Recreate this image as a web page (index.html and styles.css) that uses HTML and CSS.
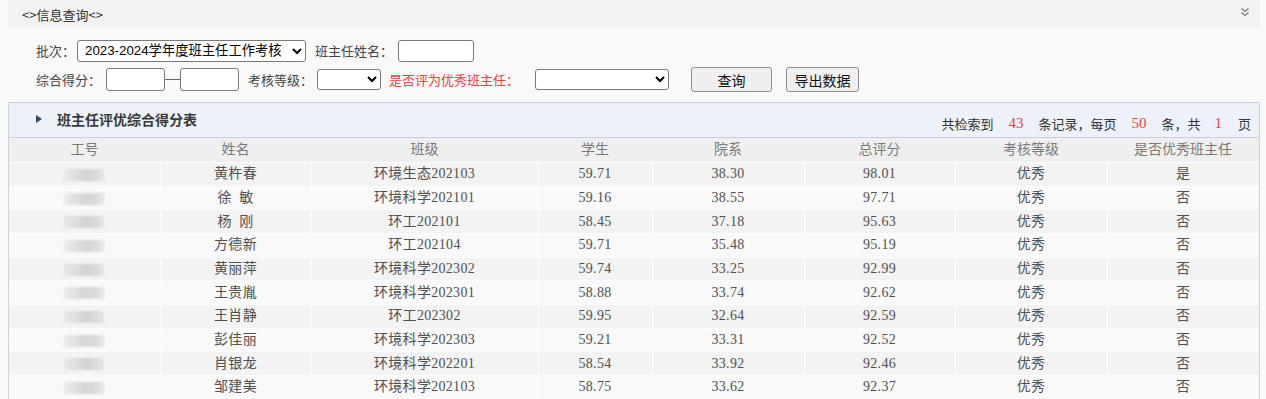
FILE: index.html
```html
<!DOCTYPE html>
<html lang="zh-CN">
<head>
<meta charset="utf-8">
<title>信息查询</title>
<link rel="stylesheet" href="styles.css">
</head>
<body>
<div class="topbar">
  <span class="topbar-title">&lt;&gt;信息查询&lt;&gt;</span>
  <svg class="collapse" width="10" height="10" viewBox="0 0 10 10"><path d="M1.5 1.5 L5 4.5 L8.5 1.5 M1.5 5.5 L5 8.5 L8.5 5.5" fill="none" stroke="#7a7a7a" stroke-width="1.3"/></svg>
</div>

<form class="query">
  <div class="qrow">
    <label class="lbl">批次：</label>
    <select class="sel sel-batch"><option>2023-2024学年度班主任工作考核</option></select>
    <label class="lbl lbl-gap">班主任姓名：</label>
    <input class="inp inp-name" type="text">
  </div>
  <div class="qrow qrow2">
    <label class="lbl">综合得分：</label>
    <input class="inp inp-score inp-first" type="text">
    <span class="dash"></span>
    <input class="inp inp-score" type="text">
    <label class="lbl lbl-gap">考核等级：</label>
    <select class="sel sel-level"><option></option></select>
    <label class="lbl lbl-red">是否评为优秀班主任：</label>
    <select class="sel sel-best"><option></option></select>
    <button type="button" class="btn btn-query">查询</button>
    <button type="button" class="btn btn-export">导出数据</button>
  </div>
</form>

<div class="panel">
  <div class="panel-head">
    <div class="panel-title"><span class="tri"></span>班主任评优综合得分表</div>
    <div class="panel-info">共检索到<span class="num">43</span>条记录，每页<span class="num">50</span>条，共<span class="num num1">1</span>页</div>
  </div>
  <table class="grid">
    <colgroup>
      <col class="c151"><col class="c151"><col class="c227"><col class="c114"><col class="c152"><col class="c151"><col class="c152"><col class="c152">
    </colgroup>
    <thead>
      <tr><th>工号</th><th>姓名</th><th>班级</th><th>学生</th><th>院系</th><th>总评分</th><th>考核等级</th><th>是否优秀班主任</th></tr>
    </thead>
    <tbody>
      <tr><td><span class="blur"></span></td><td>黄杵春</td><td>环境生态202103</td><td>59.71</td><td>38.30</td><td>98.01</td><td>优秀</td><td>是</td></tr>
      <tr><td><span class="blur b2"></span></td><td>徐&nbsp;&nbsp;敏</td><td>环境科学202101</td><td>59.16</td><td>38.55</td><td>97.71</td><td>优秀</td><td>否</td></tr>
      <tr><td><span class="blur"></span></td><td>杨&nbsp;&nbsp;刚</td><td>环工202101</td><td>58.45</td><td>37.18</td><td>95.63</td><td>优秀</td><td>否</td></tr>
      <tr><td><span class="blur b2"></span></td><td>方德新</td><td>环工202104</td><td>59.71</td><td>35.48</td><td>95.19</td><td>优秀</td><td>否</td></tr>
      <tr><td><span class="blur"></span></td><td>黄丽萍</td><td>环境科学202302</td><td>59.74</td><td>33.25</td><td>92.99</td><td>优秀</td><td>否</td></tr>
      <tr><td><span class="blur b2"></span></td><td>王贵胤</td><td>环境科学202301</td><td>58.88</td><td>33.74</td><td>92.62</td><td>优秀</td><td>否</td></tr>
      <tr><td><span class="blur"></span></td><td>王肖静</td><td>环工202302</td><td>59.95</td><td>32.64</td><td>92.59</td><td>优秀</td><td>否</td></tr>
      <tr><td><span class="blur b2"></span></td><td>彭佳丽</td><td>环境科学202303</td><td>59.21</td><td>33.31</td><td>92.52</td><td>优秀</td><td>否</td></tr>
      <tr><td><span class="blur"></span></td><td>肖银龙</td><td>环境科学202201</td><td>58.54</td><td>33.92</td><td>92.46</td><td>优秀</td><td>否</td></tr>
      <tr><td><span class="blur b2"></span></td><td>邹建美</td><td>环境科学202103</td><td>58.75</td><td>33.62</td><td>92.37</td><td>优秀</td><td>否</td></tr>
    </tbody>
  </table>
</div>
</body>
</html>
```

FILE: styles.css
```css
html {
  background: #f9f9f9;
}
body {
  margin: 0 6px 0 8px;
  font-family: "Noto Sans CJK SC", "Liberation Sans", sans-serif;
  font-size: 13px;
  color: #333;
  overflow: hidden;
}

.topbar {
  height: 28px;
  background: #f2f2f2;
  display: flex;
  align-items: center;
  justify-content: space-between;
  padding: 0 10px 0 14px;
}
.topbar-title {
  font-size: 13px;
  color: #333;
  line-height: 1;
}
.collapse {
  display: block;
  margin-top: -4px;
}

.query {
  padding: 11px 0 0 28px;
}
.qrow {
  display: flex;
  align-items: center;
  height: 23px;
}
.qrow2 {
  margin-top: 5px;
  height: 25px;
}
.lbl {
  font-size: 13px;
  color: #444;
  line-height: 1;
  white-space: nowrap;
}
.lbl-gap {
  margin-left: 9px;
}
.lbl-red {
  color: #f23c3c;
  margin-left: 8px;
}
.sel,
.inp {
  box-sizing: border-box;
  border: 1px solid #7a7a7a;
  border-radius: 3px;
  background: #fff;
  font-family: "Liberation Sans", "Noto Sans CJK SC", sans-serif;
  font-size: 13.3px;
  color: #000;
  margin: 0;
}
.sel {
  height: 21px;
  padding: 0 0 0 3px;
}
.sel-batch {
  width: 229px;
  margin-left: 2px;
  height: 22px;
}
.inp-name {
  width: 76px;
  height: 22px;
  margin-left: 5px;
}
.inp-score {
  width: 59px;
  height: 23px;
}
.inp-first {
  margin-left: 5px;
}
.dash {
  width: 15px;
  height: 1px;
  background: #666;
}
.sel-level {
  width: 64px;
  margin-left: 4px;
}
.sel-best {
  width: 134px;
  margin-left: 16px;
}
.btn {
  box-sizing: border-box;
  height: 25px;
  border: 1px solid #8f8f8f;
  border-radius: 3px;
  background: #efefef;
  font-family: "Noto Sans CJK SC", sans-serif;
  font-size: 14px;
  color: #111;
  padding: 0;
  line-height: 1;
}
.btn-query {
  width: 81px;
  margin-left: 22px;
}
.btn-export {
  width: 73px;
  margin-left: 14px;
}

.panel {
  margin-top: 10px;
  border: 1px solid #c9d3e3;
  border-right-width: 2px;
  width: 1250px;
}
.panel-head {
  height: 34px;
  background: #edf2fa;
  border-bottom: 1px solid #c5cfdf;
  display: flex;
  justify-content: space-between;
  padding: 0 8px 0 27px;
}
.panel-title {
  display: flex;
  align-items: center;
  font-size: 14px;
  font-weight: 700;
  color: #3a3a3a;
  padding-bottom: 2px;
}
.tri {
  width: 0;
  height: 0;
  border-left: 6px solid #2f4a68;
  border-top: 4px solid transparent;
  border-bottom: 4px solid transparent;
  margin-right: 15px;
}
.panel-info {
  display: flex;
  align-items: center;
  padding-top: 6px;
  font-size: 13px;
  color: #333;
}
.num {
  color: #f23c3c;
  font-family: "Liberation Serif", serif;
  font-size: 15px;
  margin: 0 15px;
}
.num1 {
  margin: 0 16px 0 14px;
}

.grid {
  border-collapse: collapse;
  table-layout: fixed;
  width: 1250px;
  font-family: "Liberation Serif", "Noto Sans CJK SC", serif;
  font-size: 14px;
}
.c151 { width: 151px; }
.c152 { width: 152px; }
.c227 { width: 227px; }
.c114 { width: 114px; }
.grid th {
  height: 24px;
  padding: 0;
  background: #efefef;
  font-weight: 400;
  color: #7a7a7a;
  border: 0;
  line-height: 1;
}
.grid td {
  height: 23.67px;
  padding: 0;
  text-align: center;
  color: #505050;
  border-left: 1px solid #fdfdfd;
  border-top: 1px solid #fcfcfc;
  line-height: 1;
  box-sizing: border-box;
  letter-spacing: 0.3px;
}
.grid td:first-child {
  border-left: 0;
}
.grid tbody tr:nth-child(odd) td {
  background: #f3f3f3;
}
.grid tbody tr:nth-child(even) td {
  background: #f9f9f9;
}
.blur {
  display: inline-block;
  width: 40px;
  height: 12px;
  vertical-align: middle;
  background: linear-gradient(90deg, #e9e9e9 0%, #dedede 30%, #d2d2d2 55%, #dadada 80%, #e6e6e6 100%);
  filter: blur(1.2px);
}
.b2 {
  background: linear-gradient(90deg, #ececec 0%, #e2e2e2 25%, #d6d6d6 50%, #d9d9d9 75%, #e8e8e8 100%);
}
```
